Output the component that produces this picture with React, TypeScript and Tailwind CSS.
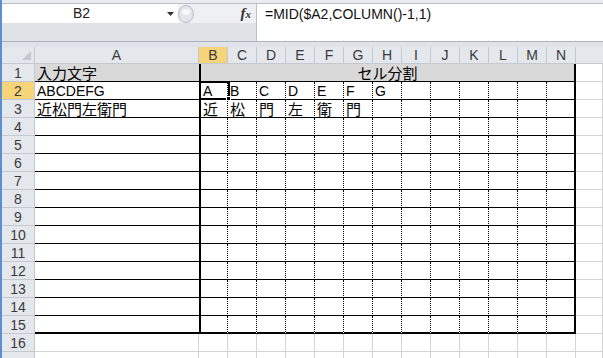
import React from "react";

const COLS = ["B", "C", "D", "E", "F", "G", "H", "I", "J", "K", "L", "M", "N"];
const SPLIT: Record<number, string[]> = {
  2: ["A", "B", "C", "D", "E", "F", "G"],
  3: ["近", "松", "門", "左", "衛", "門"],
};
const COL_A: Record<number, string> = { 1: "入力文字", 2: "ABCDEFG", 3: "近松門左衛門" };

const GRID = "grid grid-cols-[33px_164px_repeat(13,29px)_1fr]";
const LATIN = "font-['Liberation_Sans','Noto_Sans_CJK_JP',sans-serif]";
const CJK = "font-['Noto_Sans_CJK_JP','Noto_Sans',sans-serif]";

// row 2 holds latin text, the others japanese
function textClass(n: number) {
  return n === 2 ? LATIN + " text-[14px] leading-[19px]" : CJK + " text-[15px] leading-[17px]";
}

function RowHead({ n }: { n: number }) {
  const sel = n === 2;
  return (
    <div
      className={
        LATIN +
        " border-r border-b border-[#c3c9d1] text-center text-[14px] leading-[18px] text-[#3a3a3a] " +
        (sel ? "bg-[#f6d47a]" : "bg-[#e4e8ed]")
      }
    >
      {n <= 16 ? n : ""}
    </div>
  );
}

function DataRow({ n }: { n: number }) {
  const last = n === 15;
  const bottom = last ? "border-b-2 border-b-black" : "border-b border-b-black";

  if (n === 1) {
    return (
      <>
        <RowHead n={1} />
        <div className={"border-b border-b-black bg-[#d9d9d9] px-[2px] " + textClass(1)}>{COL_A[1]}</div>
        <div className={"col-span-13 border-l-2 border-r-2 border-b border-black bg-[#d9d9d9] text-center " + textClass(1)}>
          セル分割
        </div>
        <div className="border-r border-b border-[#d4d4d4] bg-white" />
      </>
    );
  }

  if (n > 15) {
    return (
      <>
        <RowHead n={n} />
        <div className="border-r border-b border-[#d4d4d4] bg-white" />
        {COLS.map((c) => (
          <div key={c} className="border-r border-b border-[#d4d4d4] bg-white" />
        ))}
        <div className="border-r border-b border-[#d4d4d4] bg-white" />
      </>
    );
  }

  const vals = SPLIT[n] ?? [];
  return (
    <>
      <RowHead n={n} />
      <div className={"bg-white px-[2px] " + textClass(n) + " " + bottom}>{COL_A[n] ?? ""}</div>
      {COLS.map((c, i) => {
        const first = i === 0;
        const lastCol = i === COLS.length - 1;
        return (
          <div
            key={c}
            className={
              "relative bg-white px-[2px] " +
              textClass(n) +
              " " +
              bottom +
              (first ? " border-l-2 border-l-black" : "") +
              (lastCol ? " border-r-2 border-r-black" : " border-r border-r-black [border-right-style:dotted]")
            }
          >
            {vals[i] ?? ""}
            {n === 2 && first && (
              <div className="absolute -left-[2px] -top-[1px] z-10 h-[19px] w-[31px] border-2 border-black">
                <div className="absolute -right-[3px] -bottom-[3px] h-[5px] w-[5px] border border-white bg-black" />
              </div>
            )}
          </div>
        );
      })}
      <div className="border-r border-b border-[#d4d4d4] bg-white" />
    </>
  );
}

function FormulaBar() {
  return (
    <div className="flex h-[47px] flex-col">
      <div className="h-[4px] border-b border-[#b9c1cc] bg-[#e9ecf0]" />
      <div className="flex h-[38px] border-b border-[#a9b3bf]">
        <div className="flex w-[254px] flex-col">
          <div className="flex h-[19px]">
            <div className={LATIN + " relative w-[176px] bg-white pl-[71px] text-[14px] leading-[19px] text-[#222]"}>
              B2
              <svg className="absolute left-[165px] top-[8px]" width="7" height="4" viewBox="0 0 7 4">
                <path d="M0 0h7L3.5 4z" fill="#333" />
              </svg>
            </div>
            <div className="relative flex flex-1 items-center bg-[#eef0f3]">
              <svg className="absolute left-0 top-[1px]" width="16" height="18" viewBox="0 0 16 18">
                <ellipse cx="8" cy="9" rx="7.5" ry="8.5" fill="#e2e5e9" stroke="#b7bec7" />
                <ellipse cx="8" cy="7" rx="4" ry="3" fill="#f7f8f9" />
              </svg>
              <span className="ml-auto mr-[5px] font-['Liberation_Serif',serif] text-[15px] font-bold italic leading-[17px] text-[#333]">
                f<span className="text-[11px]">x</span>
              </span>
            </div>
          </div>
          <div className="flex-1 bg-[#dfe3e8]" />
        </div>
        <div className={LATIN + " flex-1 border-l border-[#b9c1cc] bg-white pl-[8px] pt-[1px] text-[14px] leading-[19px] text-[#111]"}>
          =MID($A2,COLUMN()-1,1)
        </div>
      </div>
      <div className="flex-1 bg-[#dfe3e8]" />
    </div>
  );
}

export default function App() {
  const rows = Array.from({ length: 17 }, (_, i) => i + 1);
  return (
    <div className="relative h-[358px] w-[603px] overflow-hidden border-l-2 border-[#5b8fcf] bg-[#dfe3e8] text-black">
      <FormulaBar />
      <div className={GRID + " h-[17px] " + LATIN + " text-[14px] leading-[16px] text-[#3a3a3a]"}>
        <div className="relative border-r border-b border-[#c3c9d1] bg-[#e4e8ed]">
          <svg className="absolute right-[3px] bottom-[3px]" width="9" height="9" viewBox="0 0 9 9">
            <path d="M9 0v9H0z" fill="#c3c8cf" />
          </svg>
        </div>
        <div className="border-r border-b border-[#c3c9d1] bg-[#e4e8ed] text-center">A</div>
        {COLS.map((c) => (
          <div
            key={c}
            className={"border-r border-b border-[#c3c9d1] text-center " + (c === "B" ? "bg-[#f6d47a]" : "bg-[#e4e8ed]")}
          >
            {c}
          </div>
        ))}
        <div className="border-b border-[#c3c9d1] bg-[#e4e8ed]" />
      </div>
      <div className={GRID + " auto-rows-[18px]"}>
        {rows.map((n) => (
          <DataRow key={n} n={n} />
        ))}
      </div>
    </div>
  );
}
